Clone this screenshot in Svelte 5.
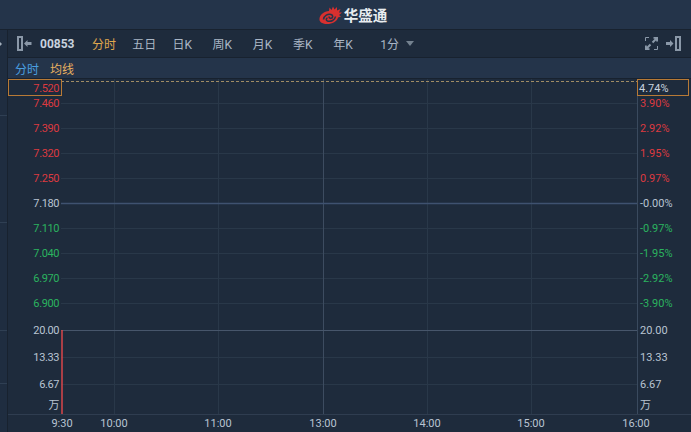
<script lang="ts">
  const tabs = ['五日', '日K', '周K', '月K', '季K', '年K'];

  // price rows, 7.180 is the previous close
  const prices = [
    { left: '7.460', right: '3.90%', tone: 'up' },
    { left: '7.390', right: '2.92%', tone: 'up' },
    { left: '7.320', right: '1.95%', tone: 'up' },
    { left: '7.250', right: '0.97%', tone: 'up' },
    { left: '7.180', right: '-0.00%', tone: 'flat' },
    { left: '7.110', right: '-0.97%', tone: 'down' },
    { left: '7.040', right: '-1.95%', tone: 'down' },
    { left: '6.970', right: '-2.92%', tone: 'down' },
    { left: '6.900', right: '-3.90%', tone: 'down' }
  ];
  const volumes = ['20.00', '13.33', '6.67'];
  const times = [
    { label: '10:00', x: 53 },
    { label: '11:00', x: 157 },
    { label: '13:00', x: 262 },
    { label: '14:00', x: 366 },
    { label: '15:00', x: 470 }
  ];
  // y positions inside the plot, measured from its top edge
  const grid = [24, 49, 74, 99, 149, 174, 199, 224, 278, 305];
</script>

<main class="app">
  <header class="brand">
    <svg class="logo" width="23" height="18" viewBox="0 0 23 18" aria-hidden="true">
      <path d="M10 5 10.500 1.500 12.500 4 14 .5 15.500 3.500 18 1 18 4.500 21.500 3 20 6.500 23 6.500 20 9 22 10.500 19 11.500C18 15.500 13.500 18 8 18 2.500 18 0 15.500 .5 12.500 1 8.500 5 5.500 10 5Z" fill="#d8302f" />
      <path d="M4.500 13.500C5 9.500 9 7.500 12 8.500 14.500 9.300 14 12 12 12.300 10.500 12.500 9.800 11.500 10.300 10.500" fill="none" stroke="#24344a" stroke-width="1.600" />
      <path d="M16.500 10.500C16 14 12 16 8.500 15 6.800 14.400 7 12.300 8.500 12" fill="none" stroke="#24344a" stroke-width="1.600" />
    </svg>
    <span class="brand-name">华盛通</span>
  </header>

  <div class="body">
    <aside class="strip">
      <i class="caret"></i>
      <i class="tick tick-a"></i>
      <i class="tick tick-b"></i>
      <i class="tick tick-c"></i>
      <i class="tick tick-d"></i>
    </aside>

    <div class="content">
      <nav class="toolbar">
        <svg width="15" height="15" viewBox="0 0 15 15" aria-hidden="true">
          <path d="M0 0H6V15H0ZM2 2V13H4V2Z" fill="#8a98a8" fill-rule="evenodd" />
          <path d="M7 7.500 10.500 4V6H14.500V9H10.500V11Z" fill="#8a98a8" />
        </svg>
        <strong class="code">00853</strong>
        <span class="tab active">分时</span>
        {#each tabs as tab}
          <span class="tab">{tab}</span>
        {/each}
        <span class="period">1分</span>
        <i class="period-arrow"></i>
        <svg class="expand" width="13" height="13" viewBox="0 0 13 13" aria-hidden="true">
          <path d="M7.500 5.500 12 1M8.500 .8H12.200V4.500" fill="none" stroke="#8a98a8" stroke-width="2" />
          <path d="M5.500 7.500 1 12M.8 8.500V12.200H4.500" fill="none" stroke="#8a98a8" stroke-width="2" />
          <path d="M.5 4V.5H4M12.500 9V12.500H9" fill="none" stroke="#8a98a8" />
        </svg>
        <svg width="15" height="15" viewBox="0 0 15 15" aria-hidden="true">
          <path d="M0 6H4V4L7.500 7.500 4 11V9H0Z" fill="#8a98a8" />
          <path d="M9 0H15V15H9ZM11 2V13H13V2Z" fill="#8a98a8" fill-rule="evenodd" />
        </svg>
      </nav>

      <div class="legend">
        <span class="legend-time">分时</span>
        <span class="legend-avg">均线</span>
      </div>

      <section class="chart">
        <div class="axis left">
          <div class="spacer"></div>
          {#each prices as p}
            <div class="price {p.tone}">{p.left}</div>
          {/each}
          <div class="vol-gap"></div>
          {#each volumes as v}
            <div class="vol">{v}</div>
          {/each}
          <div class="unit">万</div>
        </div>

        <div class="plot">
          <svg class="lines" width="576" height="335" aria-hidden="true">
            {#each grid as y}
              <line x1="0" x2="576" y1={y + 0.5} y2={y + 0.5} stroke="#293849" />
            {/each}
            {#each times as t}
              <line x1={t.x + 0.5} x2={t.x + 0.5} y1="0" y2="335" stroke={t.label === '13:00' ? '#3d4c60' : '#293849'} />
            {/each}
            <line x1="0" x2="576" y1="124.500" y2="124.500" stroke="#3f5270" stroke-width="1.600" />
            <line x1="0" x2="576" y1="251.500" y2="251.500" stroke="#47566b" />
            <line x1="0" x2="576" y1="2.500" y2="2.500" stroke="#a08c64" stroke-dasharray="3 2" />
            <line x1="1" x2="1" y1="251" y2="335" stroke="#e5484b" stroke-width="1.400" />
          </svg>
        </div>

        <div class="axis right">
          <div class="spacer"></div>
          {#each prices as p}
            <div class="price {p.tone}">{p.right}</div>
          {/each}
          <div class="vol-gap"></div>
          {#each volumes as v}
            <div class="vol">{v}</div>
          {/each}
          <div class="unit">万</div>
        </div>

        <div class="mark mark-left">7.520</div>
        <div class="mark mark-right">4.74%</div>
      </section>

      <footer class="times">
        <span class="time" style="left: 54px">9:30</span>
        {#each times as t}
          <span class="time" style="left: {t.x + 53}px">{t.label}</span>
        {/each}
        <span class="time" style="left: 628px">16:00</span>
      </footer>
    </div>
  </div>
</main>

<style>
  :global(body) {
    margin: 0;
    background: #1e2b3c;
  }

  .app {
    width: 691px;
    height: 432px;
    display: flex;
    flex-direction: column;
    overflow: hidden;
    font-family: Roboto, "Noto Sans CJK SC", sans-serif;
    font-size: 11px;
    color: #b9c4d2;
  }

  .brand {
    height: 30px;
    box-sizing: border-box;
    flex: none;
    display: flex;
    align-items: center;
    justify-content: center;
    gap: 2px;
    padding-left: 15px;
    background: #24344a;
    border-bottom: 1px solid #18222f;
  }

  .brand-name {
    font-size: 14.500px;
    font-weight: 700;
    color: #e8ecf0;
  }

  .body {
    flex: 1;
    display: flex;
    min-height: 0;
  }

  .strip {
    position: relative;
    width: 7px;
    flex: none;
    border-right: 1px solid #18222f;
    background: #1f2d40;
  }

  .caret {
    position: absolute;
    left: 0;
    top: 12px;
    width: 0;
    height: 0;
    border-top: 2px solid transparent;
    border-bottom: 2px solid transparent;
    border-left: 2px solid #a3afbc;
  }

  .tick {
    position: absolute;
    left: 0;
    width: 7px;
    height: 1px;
    background: #2f3f53;
  }

  .tick-a {
    top: 85px;
  }

  .tick-b {
    top: 192px;
  }

  .tick-c {
    top: 300px;
  }

  .tick-d {
    top: 353px;
  }

  .content {
    flex: 1;
    min-width: 0;
    display: flex;
    flex-direction: column;
  }

  .toolbar {
    height: 27px;
    flex: none;
    display: flex;
    align-items: center;
    padding: 0 10px 0 9px;
    border-bottom: 1px solid #18222f;
    font-size: 12px;
  }

  .code {
    margin-left: 8px;
    width: 52px;
    font-weight: 700;
    color: #c9d3df;
  }

  .tab {
    width: 40.200px;
    color: #aab6c5;
  }

  .tab.active {
    color: #e0a94e;
  }

  .period {
    margin-left: 7px;
    color: #aab6c5;
  }

  .period-arrow {
    margin-left: 7px;
    width: 0;
    height: 0;
    border-left: 4px solid transparent;
    border-right: 4px solid transparent;
    border-top: 5px solid #74828f;
  }

  .expand {
    margin-left: auto;
    margin-right: 8px;
  }

  .legend {
    height: 20px;
    flex: none;
    display: flex;
    align-items: center;
    gap: 11px;
    padding-left: 7px;
    background: #24344a;
    border-bottom: 1px solid #18222f;
    font-size: 12px;
  }

  .legend-time {
    color: #4a9fe0;
  }

  .legend-avg {
    color: #e8b060;
  }

  .chart {
    position: relative;
    height: 335px;
    flex: none;
    display: flex;
    border-bottom: 1px solid #2f3d50;
  }

  .axis {
    flex: none;
    display: flex;
    flex-direction: column;
  }

  .axis.left {
    width: 53px;
    text-align: right;
    padding-right: 2px;
    box-sizing: border-box;
    letter-spacing: -0.400px;
  }

  .axis.right {
    width: 54px;
    padding-left: 2px;
    box-sizing: border-box;
    border-left: 1px solid #3a4a5e;
  }

  .spacer {
    height: 12px;
  }

  .price {
    height: 25px;
    line-height: 25px;
  }

  .vol-gap {
    height: 1px;
  }

  .vol {
    height: 27px;
    line-height: 27px;
  }

  .unit {
    height: 15px;
    line-height: 15px;
  }

  .up {
    color: #dc3a40;
  }

  .down {
    color: #2bb35f;
  }

  .flat {
    color: #b9c4d2;
  }

  .plot {
    flex: none;
    width: 576px;
  }

  .lines {
    display: block;
  }

  .mark {
    position: absolute;
    top: 0;
    height: 17px;
    line-height: 17px;
    box-sizing: border-box;
    border: 1px solid #b87a36;
    background: #1e2b3c;
  }

  .mark-left {
    left: 0;
    width: 54px;
    text-align: right;
    padding-right: 2px;
    letter-spacing: -0.400px;
    color: #dc3a40;
  }

  .mark-right {
    left: 629px;
    width: 52px;
    padding-left: 1px;
    color: #c9d3df;
  }

  .times {
    position: relative;
    flex: 1;
  }

  .time {
    position: absolute;
    top: 2px;
    transform: translateX(-50%);
  }
</style>
